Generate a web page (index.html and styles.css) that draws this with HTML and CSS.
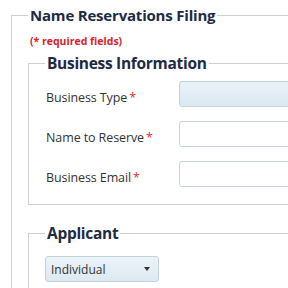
FILE: index.html
```html
<!DOCTYPE html>
<html>
<head>
<meta charset="utf-8">
<link rel="stylesheet" href="styles.css">
</head>
<body>
<fieldset class="outer">
  <legend class="title">Name Reservations Filing</legend>
  <div class="required">(* required fields)</div>
  <fieldset class="section business">
    <legend class="sub">Business Information</legend>
    <div class="row">
      <label class="lbl">Business Type<span class="star">*</span></label>
      <div class="input filled"></div>
    </div>
    <div class="row">
      <label class="lbl">Name to Reserve<span class="star">*</span></label>
      <div class="input"></div>
    </div>
    <div class="row">
      <label class="lbl">Business Email<span class="star">*</span></label>
      <div class="input"></div>
    </div>
  </fieldset>
  <fieldset class="section applicant">
    <legend class="sub">Applicant</legend>
    <div class="select"><span>Individual</span><span class="arrow"></span></div>
  </fieldset>
</fieldset>
</body>
</html>
```

FILE: styles.css
```css
html, body {
  margin: 0;
  background: #fff;
  overflow: hidden;
}
body {
  width: 288px;
  height: 288px;
  font-family: "Open Sans", sans-serif;
}
.outer {
  margin: 5px 0 0 11px;
  width: 400px;
  border: 1px solid #cfcfcf;
  border-right: none;
  padding: 0 0 20px 16px;
}
legend {
  padding: 0 2px;
}
.title {
  font-weight: 700;
  font-size: 15px;
  letter-spacing: -0.2px;
  line-height: 20px;
  color: #1d2b45;
}
.required {
  margin-top: 9px;
  margin-left: 2px;
  font-weight: 700;
  font-size: 10.5px;
  line-height: 14px;
  color: #d8232a;
}
.section {
  border: 1px solid #cfcfcf;
  border-right: none;
  margin: 0;
  padding: 0 0 0 16px;
  width: 380px;
}
.business {
  margin-top: 5px;
  padding-top: 8px;
  padding-bottom: 17px;
}
.sub {
  font-weight: 700;
  font-size: 15.5px;
  letter-spacing: -0.3px;
  line-height: 20px;
  color: #1d2b45;
}
.row {
  display: flex;
  align-items: center;
  height: 26px;
}
.row + .row {
  margin-top: 14px;
}
.lbl {
  width: 134px;
  flex: none;
  font-size: 12.5px;
  letter-spacing: -0.1px;
  color: #333;
  padding-left: 1px;
  padding-top: 6px;
  box-sizing: border-box;
}
.star {
  color: #e0323a;
  margin-left: 2px;
}
.input {
  flex: none;
  width: 200px;
  height: 26px;
  box-sizing: border-box;
  border: 1px solid #c6d6de;
  border-radius: 3px;
  background: #fff;
}
.input.filled {
  background: linear-gradient(#e9f2f8, #dbe9f2);
  border-color: #c0d3de;
}
.applicant {
  margin-top: 18px;
  padding-top: 13px;
  padding-bottom: 20px;
}
.select {
  width: 114px;
  height: 26px;
  box-sizing: border-box;
  border: 1px solid #bfd2dd;
  border-radius: 3px;
  background: linear-gradient(#ebf3f8, #dde9f1);
  display: flex;
  align-items: center;
  justify-content: space-between;
  padding: 0 8px 0 5px;
  font-size: 12px;
  color: #333;
}
.arrow {
  width: 0;
  height: 0;
  border-left: 3px solid transparent;
  border-right: 3px solid transparent;
  border-top: 4px solid #333;
}
```
